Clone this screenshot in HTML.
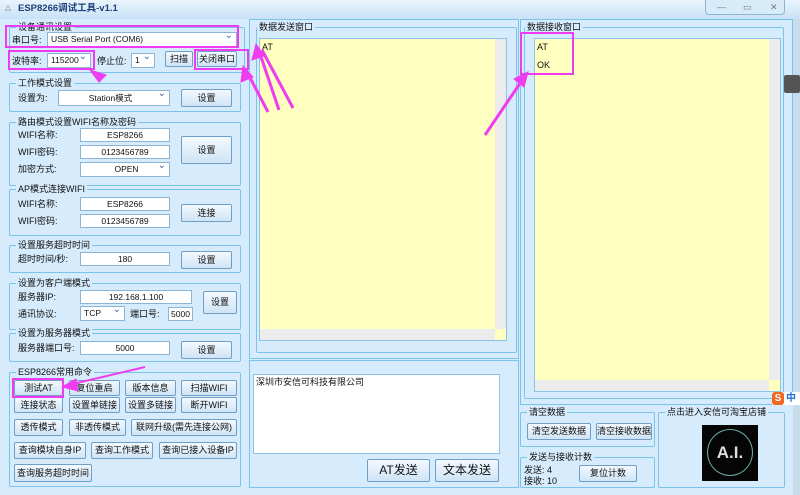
<!DOCTYPE html>
<html><head><meta charset="utf-8"><style>
*{box-sizing:border-box;margin:0;padding:0}
body{width:800px;height:495px;overflow:hidden;background:#d6ebfb;font-family:"Liberation Sans","Noto Sans CJK SC",sans-serif;font-size:9px;color:#111;position:relative}
.a{position:absolute}
.g{position:absolute;border:1px solid #7cc3ea;border-radius:2px}
.gt{position:absolute;background:#d6ebfb;padding:0 2px;font-size:9px;line-height:10px;top:-6px;left:6px;white-space:nowrap}
.in{position:absolute;background:#fff;border:1px solid #8cb4d4;text-align:center;font-size:8.5px;line-height:12px}
.cb{position:absolute;background:#fff;border:1px solid #8cb4d4;font-size:8.5px;line-height:13px;padding-left:3px;overflow:hidden}
.cb:after{content:"⌄";position:absolute;right:3px;top:-4px;color:#3a6ea5;font-size:10px}
.b{position:absolute;border:1px solid #6f9fc6;border-radius:2px;background:linear-gradient(#f3f9fe,#cfe4f6);text-align:center;font-size:9px;white-space:nowrap}
.l{position:absolute;font-size:9px;line-height:10px;white-space:nowrap}
.pk{position:absolute;border:2px solid #f03cf0}
</style></head><body>
<div class="a" style="left:0;top:0;width:800px;height:19px;background:linear-gradient(#eaf5fd,#c7e2f7)"></div>
<div class="l" style="left:18px;top:4px;font-weight:bold;color:#1e3f78;font-size:9.5px">ESP8266调试工具-v1.1</div>
<div class="a" style="left:4px;top:4px;width:10px;height:10px;color:#888;font-size:8px;line-height:10px">⁂</div>
<div class="a" style="left:705px;top:0;width:80px;height:15px;border:1px solid #8fb4d2;border-top:none;border-radius:0 0 4px 4px;background:#d8ebf9"></div>
<div class="l" style="left:717px;top:2px;color:#777">—</div><div class="l" style="left:743px;top:2px;color:#777">▭</div><div class="l" style="left:770px;top:2px;color:#777">✕</div>
<div class="a" style="left:793px;top:19px;width:7px;height:476px;background:#c9dcea"></div>

<div class="g" style="left:9px;top:27px;width:236px;height:46px"><span class="gt">设备通讯设置</span></div>
<div class="l" style="left:12px;top:35px">串口号:</div>
<div class="cb" style="left:47px;top:32px;width:190px;height:15px">USB Serial Port (COM6)</div>
<div class="l" style="left:12px;top:56px">波特率:</div>
<div class="cb" style="left:47px;top:53px;width:44px;height:15px">115200</div>
<div class="l" style="left:97px;top:56px">停止位:</div>
<div class="cb" style="left:131px;top:53px;width:24px;height:15px">1</div>
<div class="b" style="left:165px;top:51px;width:28px;height:16px;line-height:14px">扫描</div>
<div class="b" style="left:197px;top:51px;width:40px;height:16px;line-height:14px">关闭串口</div>

<div class="g" style="left:9px;top:83px;width:232px;height:29px"><span class="gt">工作模式设置</span></div>
<div class="l" style="left:18px;top:93px">设置为:</div>
<div class="cb" style="left:58px;top:90px;width:112px;height:16px;text-align:center;padding-right:10px;line-height:14px">Station模式</div>
<div class="b" style="left:181px;top:89px;width:51px;height:18px;line-height:16px">设置</div>

<div class="g" style="left:9px;top:122px;width:232px;height:64px"><span class="gt">路由模式设置WIFI名称及密码</span></div>
<div class="l" style="left:18px;top:130px">WIFI名称:</div><div class="in" style="left:80px;top:128px;width:90px;height:14px">ESP8266</div>
<div class="l" style="left:18px;top:147px">WIFI密码:</div><div class="in" style="left:80px;top:145px;width:90px;height:14px">0123456789</div>
<div class="l" style="left:18px;top:164px">加密方式:</div><div class="cb" style="left:80px;top:162px;width:90px;height:15px;text-align:center">OPEN</div>
<div class="b" style="left:181px;top:136px;width:51px;height:28px;line-height:26px">设置</div>

<div class="g" style="left:9px;top:189px;width:232px;height:47px"><span class="gt">AP模式连接WIFI</span></div>
<div class="l" style="left:18px;top:199px">WIFI名称:</div><div class="in" style="left:80px;top:197px;width:90px;height:14px">ESP8266</div>
<div class="l" style="left:18px;top:216px">WIFI密码:</div><div class="in" style="left:80px;top:214px;width:90px;height:14px">0123456789</div>
<div class="b" style="left:181px;top:204px;width:51px;height:18px;line-height:16px">连接</div>

<div class="g" style="left:9px;top:245px;width:232px;height:28px"><span class="gt">设置服务超时时间</span></div>
<div class="l" style="left:18px;top:254px">超时时间/秒:</div><div class="in" style="left:80px;top:252px;width:90px;height:14px">180</div>
<div class="b" style="left:181px;top:251px;width:51px;height:18px;line-height:16px">设置</div>

<div class="g" style="left:9px;top:283px;width:232px;height:47px"><span class="gt">设置为客户端模式</span></div>
<div class="l" style="left:18px;top:292px">服务器IP:</div><div class="in" style="left:80px;top:290px;width:112px;height:14px">192.168.1.100</div>
<div class="l" style="left:18px;top:309px">通讯协议:</div><div class="cb" style="left:80px;top:306px;width:45px;height:15px">TCP</div>
<div class="l" style="left:130px;top:309px">端口号:</div><div class="in" style="left:168px;top:307px;width:25px;height:14px">5000</div>
<div class="b" style="left:203px;top:291px;width:34px;height:23px;line-height:21px">设置</div>

<div class="g" style="left:9px;top:333px;width:232px;height:29px"><span class="gt">设置为服务器模式</span></div>
<div class="l" style="left:18px;top:343px">服务器端口号:</div><div class="in" style="left:80px;top:341px;width:90px;height:14px">5000</div>
<div class="b" style="left:181px;top:341px;width:51px;height:18px;line-height:16px">设置</div>

<div class="g" style="left:9px;top:372px;width:232px;height:115px"><span class="gt">ESP8266常用命令</span></div>
<div class="b" style="left:14px;top:380px;width:49px;height:16px;line-height:14px">测试AT</div>
<div class="b" style="left:69px;top:380px;width:51px;height:16px;line-height:14px">复位重启</div>
<div class="b" style="left:125px;top:380px;width:51px;height:16px;line-height:14px">版本信息</div>
<div class="b" style="left:181px;top:380px;width:56px;height:16px;line-height:14px">扫描WIFI</div>
<div class="b" style="left:14px;top:397px;width:49px;height:16px;line-height:14px">连接状态</div>
<div class="b" style="left:69px;top:397px;width:51px;height:16px;line-height:14px">设置单链接</div>
<div class="b" style="left:125px;top:397px;width:51px;height:16px;line-height:14px">设置多链接</div>
<div class="b" style="left:181px;top:397px;width:56px;height:16px;line-height:14px">断开WIFI</div>
<div class="b" style="left:14px;top:419px;width:49px;height:17px;line-height:15px">透传模式</div>
<div class="b" style="left:69px;top:419px;width:57px;height:17px;line-height:15px">非透传模式</div>
<div class="b" style="left:131px;top:419px;width:106px;height:17px;line-height:15px">联网升级(需先连接公网)</div>
<div class="b" style="left:14px;top:442px;width:72px;height:17px;line-height:15px">查询模块自身IP</div>
<div class="b" style="left:91px;top:442px;width:62px;height:17px;line-height:15px">查询工作模式</div>
<div class="b" style="left:159px;top:442px;width:78px;height:17px;line-height:15px">查询已接入设备IP</div>
<div class="b" style="left:14px;top:464px;width:78px;height:18px;line-height:16px">查询服务超时时间</div>

<div class="a" style="left:249px;top:19px;width:270px;height:340px;border:1px solid #7cc3ea"></div>
<div class="g" style="left:256px;top:27px;width:261px;height:326px"><span class="gt" style="left:0">数据发送窗口</span></div>
<div class="a" style="left:259px;top:38px;width:248px;height:303px;background:#ffffc0;border:1px solid #8cc3e8"></div>
<div class="l" style="left:262px;top:42px">AT</div>
<div class="a" style="left:495px;top:39px;width:11px;height:290px;background:#ececec"></div>
<div class="a" style="left:260px;top:329px;width:235px;height:11px;background:#ececec"></div>
<div class="a" style="left:249px;top:360px;width:270px;height:128px;border:1px solid #7cc3ea"></div>
<div class="a" style="left:253px;top:374px;width:247px;height:80px;background:#fff;border:1px solid #8cc3e8"></div>
<div class="l" style="left:256px;top:377px">深圳市安信可科技有限公司</div>
<div class="b" style="left:367px;top:459px;width:63px;height:23px;line-height:21px;font-size:12px">AT发送</div>
<div class="b" style="left:435px;top:459px;width:64px;height:23px;line-height:21px;font-size:12px">文本发送</div>

<div class="a" style="left:520px;top:19px;width:273px;height:386px;border:1px solid #7cc3ea"></div>
<div class="g" style="left:524px;top:27px;width:260px;height:372px"><span class="gt" style="left:0">数据接收窗口</span></div>
<div class="a" style="left:534px;top:38px;width:247px;height:354px;background:#ffffc0;border:1px solid #8cc3e8"></div>
<div class="l" style="left:537px;top:42px">AT</div>
<div class="l" style="left:537px;top:60px">OK</div>
<div class="a" style="left:769px;top:39px;width:11px;height:341px;background:#ececec"></div>
<div class="a" style="left:535px;top:380px;width:234px;height:11px;background:#ececec"></div>
<div class="a" style="left:784px;top:75px;width:16px;height:18px;background:#555;border-radius:2px"></div>

<div class="g" style="left:520px;top:412px;width:135px;height:35px"><span class="gt">请空数据</span></div>
<div class="b" style="left:527px;top:423px;width:64px;height:17px;line-height:15px">清空发送数据</div>
<div class="b" style="left:596px;top:423px;width:56px;height:17px;line-height:15px">清空接收数据</div>
<div class="g" style="left:520px;top:457px;width:135px;height:31px"><span class="gt">发送与接收计数</span></div>
<div class="l" style="left:524px;top:465px">发送: 4</div>
<div class="l" style="left:524px;top:476px">接收: 10</div>
<div class="b" style="left:579px;top:465px;width:58px;height:17px;line-height:15px">复位计数</div>
<div class="g" style="left:658px;top:412px;width:127px;height:76px"><span class="gt">点击进入安信可淘宝店铺</span></div>
<div class="a" style="left:702px;top:425px;width:56px;height:56px;background:#050505"></div>
<div class="a" style="left:707px;top:429px;width:46px;height:47px;border:1.5px solid #6aa9a8;border-radius:50%;color:#ddd;font-weight:bold;font-size:17px;text-align:center;line-height:45px">A.I.</div>
<div class="a" style="left:772px;top:392px;width:28px;height:13px;background:#fff"></div>
<div class="a" style="left:772px;top:392px;width:12px;height:13px;background:#f26522;border-radius:3px;color:#fff;font-weight:bold;font-size:10px;text-align:center;line-height:13px">S</div>
<div class="l" style="left:786px;top:394px;color:#1d6fd1;font-weight:bold;font-size:10px">中</div>

<div class="pk" style="left:5px;top:25px;width:234px;height:23px"></div>
<div class="pk" style="left:8px;top:50px;width:87px;height:20px"></div>
<div class="pk" style="left:194px;top:49px;width:55px;height:21px"></div>
<div class="pk" style="left:520px;top:32px;width:54px;height:43px"></div>
<div class="pk" style="left:12px;top:378px;width:52px;height:20px"></div>
<svg class="a" style="left:0;top:0" width="800" height="495" fill="#f03cf0" stroke="#f03cf0">
<path d="M92 72 L100 82" stroke-width="2"/>
<polygon points="90,70 106,75 99,82"/>
<path d="M279 110 L258 48" stroke-width="3"/><polygon points="256,44 252,60 264,56"/>
<path d="M293 108 L262 50" stroke-width="3"/>
<path d="M268 112 L246 70" stroke-width="3"/><polygon points="243,66 241,82 253,77"/>
<path d="M485 135 L525 76" stroke-width="3"/><polygon points="528,72 514,79 524,87"/>
<path d="M145 367 L64 386" stroke-width="2"/><polygon points="62,387 76,379 78,391"/>
</svg>
</body></html>
